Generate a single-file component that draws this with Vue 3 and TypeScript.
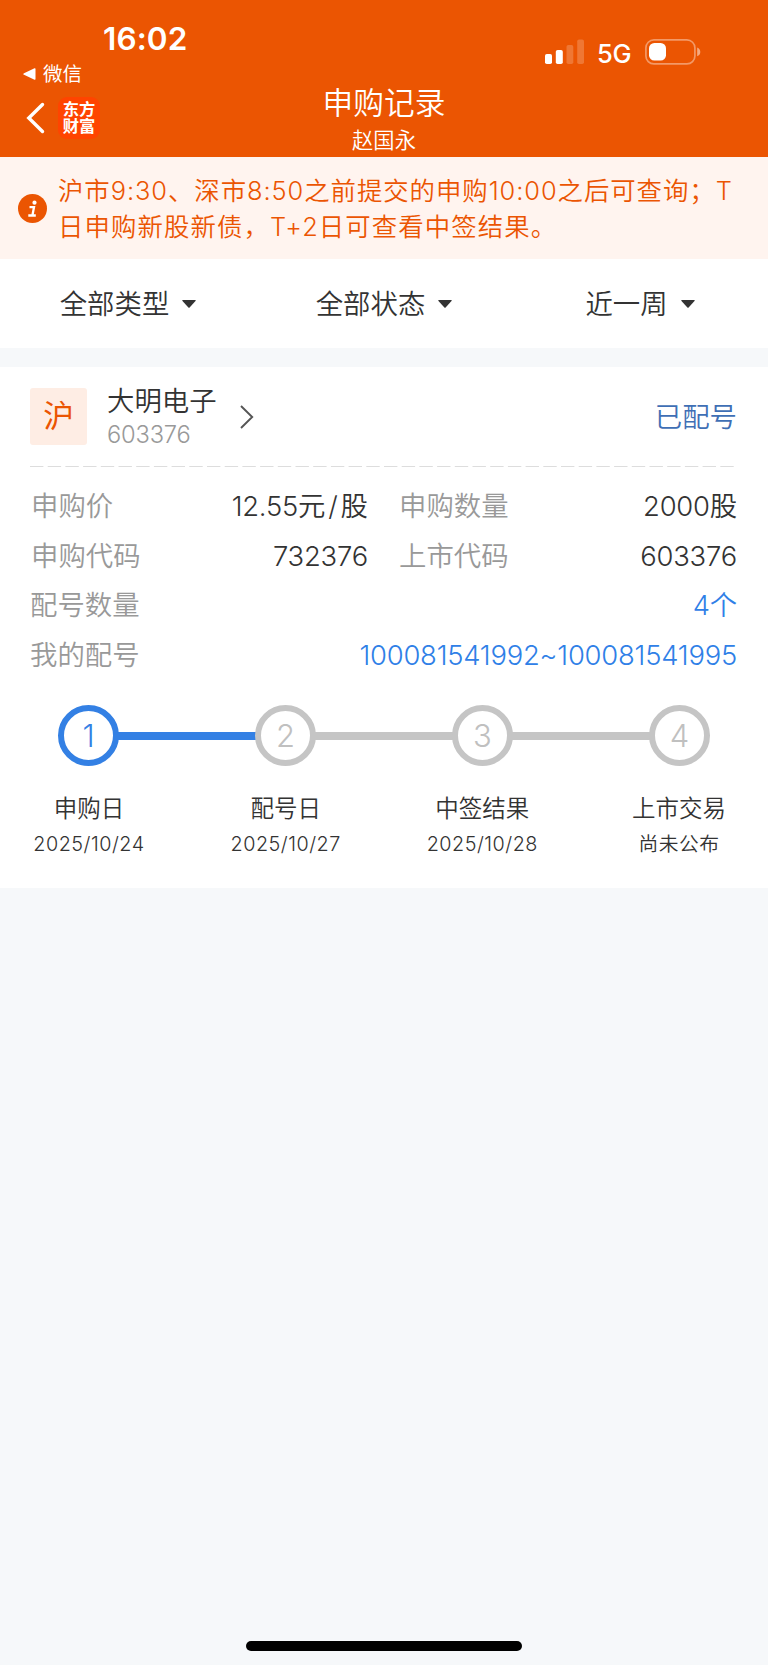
<script setup lang="ts">
interface Field { label: string; value: string; unit?: string; inset?: boolean }
interface Step { title: string; date: string; done?: boolean }

const filters: string[] = ['全部类型', '全部状态', '近一周']
const pairs: Field[][] = [
  [{ label: '申购价', value: '12.55', unit: '元/股', inset: true }, { label: '申购数量', value: '2000股' }],
  [{ label: '申购代码', value: '732376', inset: true }, { label: '上市代码', value: '603376' }],
]
const allotments: Field[] = [
  { label: '配号数量', value: '4个' },
  { label: '我的配号', value: '100081541992~100081541995' },
]
const steps: Step[] = [
  { title: '申购日', date: '2025/10/24', done: true },
  { title: '配号日', date: '2025/10/27' },
  { title: '中签结果', date: '2025/10/28' },
  { title: '上市交易', date: '尚未公布' },
]
</script>

<template>
  <div class="screen">
    <header class="header">
      <div class="status">
        <span class="time">16:02</span>
        <div class="signals">
          <svg class="bars" width="40" height="26" viewBox="0 0 40 26" fill="#fff">
            <rect x="0" y="15" width="7" height="10" rx="1.8" />
            <rect x="10.8" y="11" width="7" height="14" rx="1.8" />
            <rect x="21.5" y="6" width="6.8" height="19" rx="1.8" opacity=".2" />
            <rect x="32.2" y="0.4" width="6.8" height="24.6" rx="1.8" opacity=".2" />
          </svg>
          <span class="network">5G</span>
          <svg class="battery" width="56" height="26" viewBox="0 0 56 26">
            <rect x="0.9" y="0.9" width="49" height="24" rx="8" fill="none" stroke="#fff" stroke-opacity=".4" stroke-width="1.7" />
            <rect x="4" y="4" width="17" height="17.6" rx="5.4" fill="#fff" />
            <path d="M52.2 8.6c1.9.7 3.1 2.3 3.1 4.3s-1.2 3.6-3.1 4.3z" fill="#fff" fill-opacity=".5" />
          </svg>
        </div>
      </div>
      <div class="return">
        <svg width="13" height="12" viewBox="0 0 13 12"><path d="M1 5.2 11.5.3q1-.4 1 .6v10.2q0 1-1 .6L1 6.8q-1.5-.8 0-1.6z" fill="#fff" /></svg>
        <span>微信</span>
      </div>
      <div class="nav">
        <div class="nav-left">
          <svg width="19" height="32" viewBox="0 0 19 32"><path d="M16.500 2.500 2.800 16 16.500 29.500" fill="none" stroke="#fff" stroke-width="3.400" stroke-linecap="round" /></svg>
          <div class="logo"><span>东方</span><span>财富</span></div>
        </div>
        <div class="titles">
          <h1>申购记录</h1>
          <p>赵国永</p>
        </div>
      </div>
    </header>

    <section class="notice">
      <svg class="info" width="29" height="29" viewBox="0 0 29 29">
        <circle cx="14.500" cy="14.500" r="14.500" fill="#eb5502" />
        <circle cx="16.500" cy="8.700" r="2.100" fill="#fff" />
        <path d="M11.500 13.200h4.500l-1.600 8.300M10.300 21.500h7.500" fill="none" stroke="#fff" stroke-width="2.300" />
      </svg>
      <p>沪市9:30、深市8:50之前提交的申购10:00之后可查询；T<br><span class="second">日申购新股新债，T+2日可查看中签结果。</span></p>
    </section>

    <nav class="filters">
      <div v-for="name in filters" :key="name" class="filter">
        <span>{{ name }}</span>
        <svg width="14" height="8" viewBox="0 0 14 8"><path d="M.8 0h12.400q1 .2.300 1L7.600 7.600q-.6.500-1.200 0L.5 1Q-.2.200.8 0z" fill="#333" /></svg>
      </div>
    </nav>

    <main class="card">
      <div class="stock">
        <span class="market">沪</span>
        <div class="identity">
          <span class="name">大明电子</span>
          <span class="code">603376</span>
        </div>
        <svg class="more" width="14" height="24" viewBox="0 0 14 24"><path d="M1 1 12.200 12 1 23" fill="none" stroke="#555" stroke-width="1.900" /></svg>
        <span class="state">已配号</span>
      </div>
      <svg class="divider" width="706" height="1"><path d="M0 .5h704" stroke="#ddd" stroke-dasharray="13.400 4.300" /></svg>

      <div class="fields">
        <div v-for="(pair, i) in pairs" :key="i" class="pair">
          <div v-for="f in pair" :key="f.label" class="field">
            <span class="label" :class="{ inset: f.inset }">{{ f.label }}</span>
            <span class="value">{{ f.value }}<span v-if="f.unit" class="unit">{{ f.unit }}</span></span>
          </div>
        </div>
        <div v-for="f in allotments" :key="f.label" class="field">
          <span class="label">{{ f.label }}</span>
          <span class="value link">{{ f.value }}</span>
        </div>
      </div>

      <div class="track">
        <template v-for="(s, i) in steps" :key="s.title">
          <span class="dot" :class="{ done: s.done }">{{ i + 1 }}</span>
          <span v-if="i < steps.length - 1" class="line" :class="{ done: s.done }"></span>
        </template>
      </div>
      <div class="captions">
        <div v-for="s in steps" :key="s.title" class="caption">
          <span class="step-title">{{ s.title }}</span>
          <span class="step-date">{{ s.date }}</span>
        </div>
      </div>
    </main>

    <footer class="home"><span></span></footer>
  </div>
</template>

<style>
body { background: #f6f8fa; }
</style>

<style scoped>
.screen {
  display: flex; flex-direction: column; width: 768px; height: 1665px; overflow: hidden;
  background: #f6f8fa; color: #333; white-space: nowrap;
  font-family: Inter, "Noto Sans CJK SC", sans-serif; font-size: 27.400px; line-height: 36px; font-weight: 350;
}
h1, p { margin: 0; font-weight: inherit; }
svg { display: block; flex: none; }
.header { height: 157px; background: #eb5502; color: #fff; }
.status { display: flex; justify-content: space-between; height: 62px; padding: 0 67px 0 103px; }
.time { margin-top: 19px; line-height: 40px; font-size: 31.500px; font-weight: 600; letter-spacing: .1px; }
.signals { display: flex; align-items: center; height: 26px; margin-top: 39px; }
.network { width: 35px; margin: 3px 13px 0 12px; font-size: 25.500px; font-weight: 500; letter-spacing: -.2px; line-height: 26px; }
.return { display: flex; align-items: center; gap: 7px; height: 24px; padding-left: 23px; font-size: 19.500px; line-height: 24px; font-weight: 400; }
.nav { display: grid; grid-template-columns: 1fr 240px 1fr; height: 71px; }
.nav-left { display: flex; align-items: center; gap: 13px; height: 42px; margin-top: 11px; padding-left: 26px; }
.logo {
  display: flex; flex-direction: column; align-items: center; justify-content: center;
  width: 42px; height: 42px; border-radius: 9px; background: #ff4400; font-size: 16.300px; font-weight: 700; line-height: 17.500px;
}
.titles { text-align: center; }
.titles h1 { font-size: 30.700px; line-height: 33px; }
.titles p { margin-top: 9px; font-size: 21.300px; line-height: 24px; }
.notice {
  display: flex; align-items: center; gap: 11px; height: 102px; padding: 2px 0 0 18px; box-sizing: border-box;
  background: #fff4ef; color: #eb5502; font-size: 25.400px; line-height: 35.800px; letter-spacing: .950px;
}
.second { letter-spacing: 1.100px; }
.info { margin-top: -2px; }
.filters { display: grid; grid-template-columns: repeat(3, 1fr); height: 89px; background: #fff; }
.filter { display: flex; align-items: center; justify-content: center; gap: 13px; }
.card { height: 521px; margin-top: 19px; background: #fff; }
.stock { display: flex; align-items: center; height: 57px; padding: 21px 31px 21px 30px; }
.market { width: 57px; border-radius: 3px; background: #feede4; color: #eb5502; font-size: 30.700px; font-weight: 400; line-height: 56px; height: 57px; text-align: center; }
.identity { display: flex; flex-direction: column; width: 110px; margin: 2px 0 0 20px; }
.name { line-height: 34px; }
.code { line-height: 34px; color: #999; font-size: 23.700px; letter-spacing: -.2px; }
.more { margin-left: 23px; }
.state { margin: 0 0 0 auto; color: #3f6fb5; }
.divider { margin-left: 30px; }
.fields { padding: 14px 31px 0 30px; }
.pair { display: grid; grid-template-columns: 338px 338px; column-gap: 31px; }
.field { display: flex; align-items: center; justify-content: space-between; height: 49.700px; }
.label { color: #999; }
.label.inset { padding-left: 1px; }
.value { letter-spacing: -.2px; }
.unit { margin-right: -2.800px; letter-spacing: 2.800px; }
.link { color: #2f80e7; }
.track { display: flex; align-items: center; height: 61px; margin-top: 25.400px; padding: 0 58px; }
.dot {
  box-sizing: border-box; width: 61px; height: 61px; border: 6px solid #c5c5c5; border-radius: 50%;
  color: #c0c0c0; font-size: 31px; font-weight: 300; line-height: 50px; text-align: center;
}
.line { flex: 1; height: 8px; margin: 0 -1px; background: #c5c5c5; }
.dot.done { border-color: #3380e4; color: #3380e4; }
.line.done { background: #3380e4; }
.captions { display: flex; justify-content: space-between; margin-top: 25px; padding: 0 30px; }
.caption { display: flex; flex-direction: column; align-items: center; width: 118px; }
.step-title { line-height: 36px; font-size: 23.500px; }
.step-date { line-height: 34px; font-size: 19.800px; letter-spacing: .5px; }
.home { display: flex; justify-content: center; margin-top: auto; padding-bottom: 14.500px; }
.home span { width: 275.500px; height: 9.500px; border-radius: 5px; background: #000; }
</style>
